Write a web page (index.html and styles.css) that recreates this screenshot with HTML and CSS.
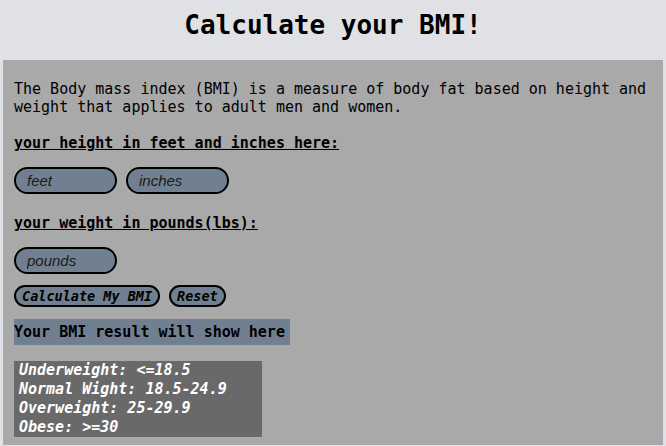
FILE: index.html
```html
<!DOCTYPE html>
<html>
<head>
<meta charset="utf-8">
<link rel="stylesheet" href="styles.css">
</head>
<body>
<header class="top">
  <h1 class="title">Calculate your BMI!</h1>
</header>
<main class="panel">
  <p class="intro">The Body mass index (BMI) is a measure of body fat based on height and weight that applies to adult men and women.</p>
  <label class="label">your height in feet and inches here:</label>
  <div class="row row-height">
    <input class="field" type="text" placeholder="feet">
    <input class="field" type="text" placeholder="inches">
  </div>
  <label class="label label-weight">your weight in pounds(lbs):</label>
  <div class="row row-weight">
    <input class="field" type="text" placeholder="pounds">
  </div>
  <div class="row buttons">
    <button class="btn">Calculate My BMI</button>
    <button class="btn">Reset</button>
  </div>
  <div class="result">Your BMI result will show here</div>
  <div class="legend">
    <div>Underweight: &lt;=18.5</div>
    <div>Normal Wight: 18.5-24.9</div>
    <div>Overweight: 25-29.9</div>
    <div>Obese: &gt;=30</div>
  </div>
</main>
</body>
</html>
```
FILE: styles.css
```css
* { box-sizing: border-box; }
html, body {
  margin: 0;
  padding: 0;
  background: #e0e1e5;
  font-family: "DejaVu Sans Mono", monospace;
  color: #000;
}
.top {
  height: 60px;
  display: flex;
  align-items: center;
  justify-content: center;
}
.title {
  margin: 0;
  font-size: 26px;
  font-weight: bold;
  line-height: 30px;
  position: relative;
  top: -5px;
}
.panel {
  margin: 0 3px;
  background: #a9a9a9;
  padding: 20px 11px 8px;
  display: flex;
  flex-direction: column;
  align-items: flex-start;
  font-size: 15px;
  line-height: 18px;
}
.intro {
  margin: 0;
}
.label {
  margin-top: 18px;
  font-weight: bold;
  text-decoration: underline;
}
.row {
  display: flex;
  gap: 9px;
}
.row-height {
  margin-top: 15px;
}
.label-weight {
  margin-top: 20px;
}
.row-weight {
  margin-top: 15px;
}
.field {
  width: 103px;
  height: 27px;
  border: 2px solid #000;
  border-radius: 14px;
  background: #708090;
  padding: 0 11px;
  font-family: "Liberation Sans", Arial, sans-serif;
  font-style: italic;
  font-size: 15px;
  color: #111;
  outline: none;
}
.field::placeholder {
  color: #1a1a1a;
  opacity: 1;
}
.buttons {
  margin-top: 11px;
}
.btn {
  height: 22px;
  border: 2px solid #000;
  border-radius: 11px;
  background: #708090;
  padding: 0 6px;
  font-family: "DejaVu Sans Mono", monospace;
  font-weight: bold;
  font-style: italic;
  font-size: 13.5px;
  line-height: 16px;
  color: #000;
}
.result {
  margin-top: 12px;
  background: #708090;
  font-weight: bold;
  padding: 4px 5px 4px 0;
  line-height: 18px;
}
.legend {
  margin-top: 16px;
  width: 248px;
  background: #696969;
  color: #fff;
  font-weight: bold;
  font-style: italic;
  padding: 0 5px;
  line-height: 19px;
}
```
